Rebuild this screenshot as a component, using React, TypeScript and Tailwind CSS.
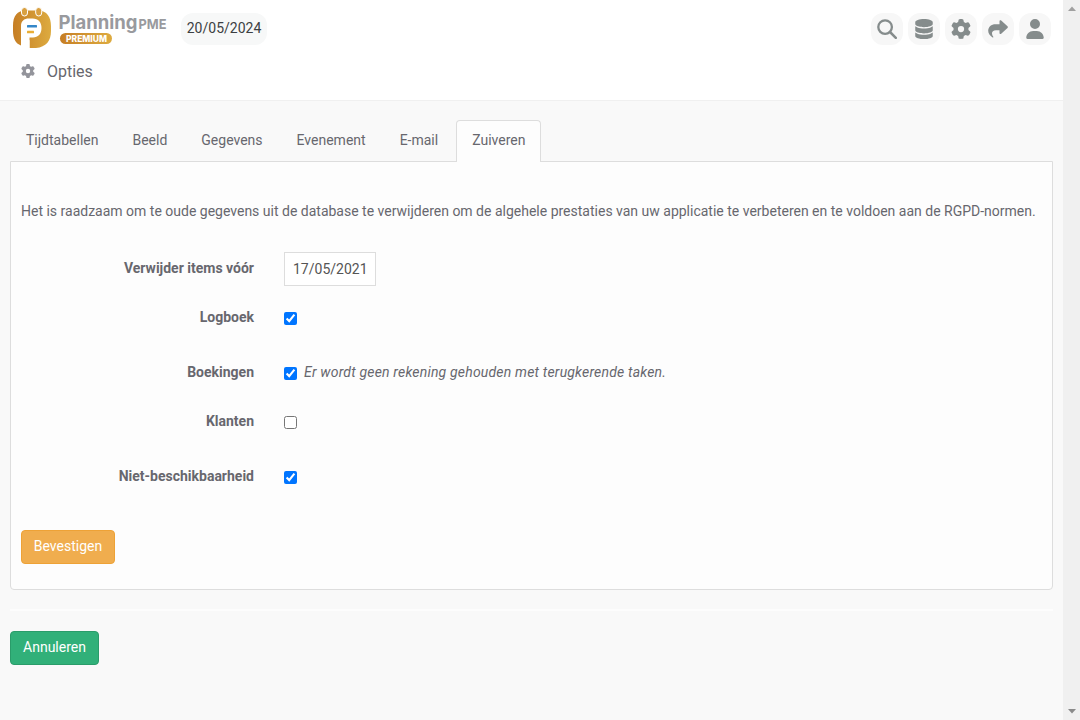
import React from 'react';
import { FaDatabase, FaGear, FaUser } from 'react-icons/fa6';

const tabs = ['Tijdtabellen', 'Beeld', 'Gegevens', 'Evenement', 'E-mail', 'Zuiveren'];

const rows = [
  { label: 'Logboek', checked: true, note: '', height: 'h-[55px]' },
  { label: 'Boekingen', checked: true, note: 'Er wordt geen rekening gehouden met terugkerende taken.', height: 'h-[49px]' },
  { label: 'Klanten', checked: false, note: '', height: 'h-[55px]' },
  { label: 'Niet-beschikbaarheid', checked: true, note: '', height: 'h-[55px]' },
];

const SearchIcon: React.FC<{ className?: string }> = ({ className }) => (
  <svg viewBox="0 0 20 20" fill="none" stroke="currentColor" className={className}>
    <circle cx="8.100" cy="8.100" r="6.800" strokeWidth="2.300" />
    <path d="M13 13L18.800 18.800" strokeWidth="2.500" strokeLinecap="round" />
  </svg>
);

const ShareIcon: React.FC<{ className?: string }> = ({ className }) => (
  <svg viewBox="0 0 20 20" fill="currentColor" className={className}>
    <path d="M11.500 2.200C11.500 1.300 12.500 0.900 13.200 1.500L19.500 7.300C20 7.800 20 8.500 19.500 9L13.200 14.800C12.500 15.400 11.500 15 11.500 14.100V11.200H8C5.300 11.200 3.800 12.600 4 14.800C4.100 16 4.700 17 5.300 17.800C5.600 18.300 5.100 18.800 4.600 18.500C2 16.900 0.200 14.600 0.200 11.800C0.200 7.800 3.300 5.200 7.500 5.200H11.500Z" />
  </svg>
);

const actions = [SearchIcon, FaDatabase, FaGear, ShareIcon, FaUser];

const Logo: React.FC = () => (
  <svg width="156" height="44" viewBox="0 0 156 44" className="shrink-0">
    <defs>
      <linearGradient id="gold" x1="0" y1="0" x2="1" y2="0">
        <stop offset="0" stopColor="#C67E24" />
        <stop offset="1" stopColor="#DDAB40" />
      </linearGradient>
    </defs>
    <path d="M13 6.500H25C34 6.500 38 13 38 22V27C38 37 33 43 23 44H16.500V36L8 41.500C2.500 39.500 0 34 0 27V22C0 12 4 6.500 13 6.500Z" fill="url(#gold)" />
    <path d="M8 44V22C8 17 11 14.500 16 14.500H19.500C25.500 14.500 28.500 18.500 28.500 24C28.500 30 25 33.500 20 33.500H16.500V44Z" fill="#fff" />
    <rect x="8.500" y="3.500" width="6" height="8.500" rx="3" fill="#D9A040" stroke="#fff" />
    <rect x="22.700" y="3.500" width="6" height="8.500" rx="3" fill="#D9A040" stroke="#fff" />
    <rect x="14" y="21" width="10" height="2.600" rx="0.500" fill="#3587C8" />
    <rect x="14" y="26.700" width="7" height="2.600" rx="0.500" fill="#E9AE35" />
    <text x="45.500" y="24.500" textLength="79" lengthAdjust="spacingAndGlyphs" fill="#999A9E" className="font-['Inter'] text-[19px] font-bold">Planning</text>
    <text x="125.500" y="24.500" textLength="28" lengthAdjust="spacingAndGlyphs" fill="#999A9E" className="font-['Inter'] text-[13.5px] font-bold">PME</text>
    <rect x="47" y="29" width="52" height="11" rx="5.500" fill="url(#gold)" />
    <text x="53" y="37.500" textLength="41" lengthAdjust="spacingAndGlyphs" fill="#fff" className="font-['Inter'] text-[8.5px] font-extrabold">PREMIUM</text>
  </svg>
);

const Header: React.FC = () => (
  <header className="h-[101px] border-b border-[#f0f0f0] bg-white">
    <div className="flex items-start pl-[13px] pr-3 pt-1">
      <Logo />
      <div className="ml-3 mt-[9px] flex h-8 w-[86px] items-center justify-center rounded-xl bg-[#f7f8f8] pb-[3px] text-sm text-[#3c3f42]">
        20/05/2024
      </div>
      <div className="ml-auto mt-[9px] flex gap-[5px]">
        {actions.map((Icon, i) => (
          <button key={i} className="flex h-8 w-8 items-center justify-center rounded-xl bg-[#f7f7f7] pb-px text-[#858c8c]">
            <Icon className="h-5 w-5" />
          </button>
        ))}
      </div>
    </div>
    <div className="mt-[11px] flex items-center pl-[21px]">
      <FaGear className="h-3.5 w-3.5 text-[#93949b]" />
      <h1 className="relative top-px ml-3 text-base text-[#67676e]">Opties</h1>
    </div>
  </header>
);

const PurgeForm: React.FC = () => (
  <div className="h-[429px] rounded-b-[4px] border border-[#ddd] bg-[#fdfdfd] px-2.5 pt-[39px]">
    <p className="whitespace-nowrap leading-5">
      Het is raadzaam om te oude gegevens uit de database te verwijderen om de algehele prestaties van uw applicatie te verbeteren en te voldoen aan de RGPD-normen.
    </p>
    <div className="mt-[30px] flex h-[49px]">
      <label className="w-[233px] pt-[7px] text-right font-bold leading-5">Verwijder items vóór</label>
      <input
        defaultValue="17/05/2021"
        className="ml-[30px] mt-px h-[34px] w-[92px] border border-[#ddd] bg-white px-2 text-sm text-[#555]"
      />
    </div>
    {rows.map((row) => (
      <div key={row.label} className={`flex ${row.height}`}>
        <label className="w-[233px] pt-[7px] text-right font-bold leading-5">{row.label}</label>
        <input type="checkbox" defaultChecked={row.checked} className="ml-[30px] mt-3 h-[13px] w-[13px]" />
        {row.note && <em className="ml-[7px] pt-[7px] leading-5 tracking-[0.19px]">{row.note}</em>}
      </div>
    ))}
    <button className="mt-4 h-[34px] w-[94px] rounded border border-[#eea236] bg-[#f0ad4e] pb-[2px] text-white">Bevestigen</button>
  </div>
);

const Scrollbar: React.FC = () => (
  <div className="flex w-[17px] shrink-0 flex-col items-center justify-between bg-[#f0f0f0] py-[6px]">
    <svg width="8" height="5" viewBox="0 0 8 5"><path d="M0 5L4 0.500L8 5Z" fill="#a0a0a0" /></svg>
    <svg width="8" height="5" viewBox="0 0 8 5"><path d="M0 0L4 4.500L8 0Z" fill="#8a8a8a" /></svg>
  </div>
);

export default function App() {
  return (
    <div className="flex h-[720px] w-[1080px] overflow-hidden bg-[#f9f9f9] font-['Roboto',sans-serif] text-sm text-[#67676e]">
      <div className="w-[1063px]">
        <Header />
        <main className="pl-2.5 pr-2.5 pt-[19px]">
          <nav className="relative z-10 -mb-px flex gap-[2px]">
            {tabs.map((tab) => (
              <a
                key={tab}
                className={
                  tab === 'Zuiveren'
                    ? 'h-[42px] rounded-t-[4px] border border-b-0 border-[#ddd] bg-[#fdfdfd] px-[15px] pt-[9px] leading-5'
                    : 'h-[41px] border border-transparent px-[15px] pt-[9px] leading-5'
                }
              >
                {tab}
              </a>
            ))}
          </nav>
          <PurgeForm />
          <hr className="mt-[19px] border-t-2 border-[#fdfdfd]" />
          <button className="mt-5 h-[34px] w-[89px] rounded border border-[#2a9c6a] bg-[#31b079] pb-[2px] text-white">Annuleren</button>
        </main>
      </div>
      <Scrollbar />
    </div>
  );
}
